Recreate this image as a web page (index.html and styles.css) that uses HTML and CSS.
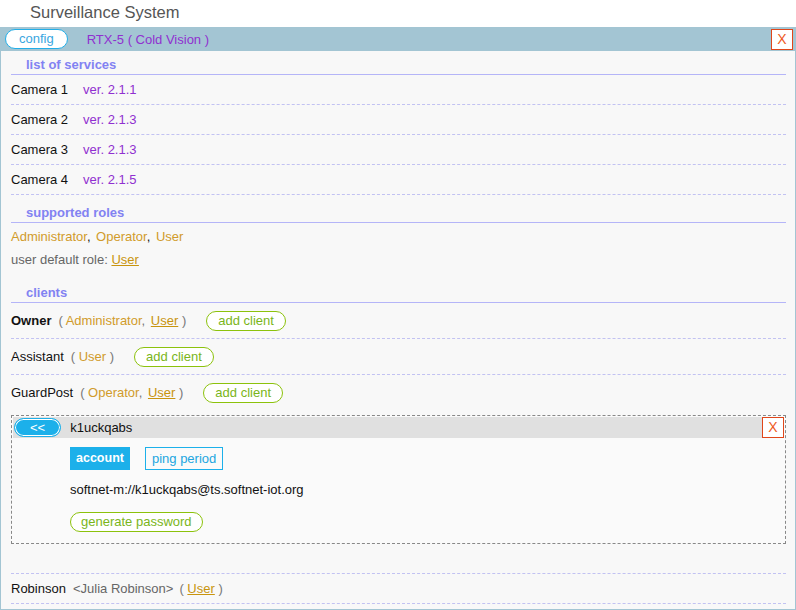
FILE: index.html
```html
<!DOCTYPE html>
<html>
<head>
<meta charset="utf-8">
<title>Surveillance System</title>
<link rel="stylesheet" href="styles.css">
</head>
<body>
<div class="title">Surveillance System</div>
<div class="panel">
  <div class="bar">
    <button class="pill pill-blue">config</button>
    <span class="device">RTX-5 ( Cold Vision )</span>
    <button class="close">X</button>
  </div>
  <div class="content">
    <h3 class="section first">list of services</h3>
    <div class="row"><span class="name">Camera 1</span><span class="ver">ver. 2.1.1</span></div>
    <div class="row"><span class="name">Camera 2</span><span class="ver">ver. 2.1.3</span></div>
    <div class="row"><span class="name">Camera 3</span><span class="ver">ver. 2.1.3</span></div>
    <div class="row"><span class="name">Camera 4</span><span class="ver">ver. 2.1.5</span></div>

    <h3 class="section">supported roles</h3>
    <div class="roles">
      <div class="line"><span class="role">Administrator</span>, <span class="role">Operator</span>, <span class="role">User</span></div>
      <div class="line muted">user default role: <a class="link">User</a></div>
    </div>

    <h3 class="section">clients</h3>
    <div class="crow"><span class="cname strong">Owner</span><span class="paren">( <span class="role">Administrator</span>, <a class="link role">User</a> )</span><button class="pill pill-green">add client</button></div>
    <div class="crow"><span class="cname">Assistant</span><span class="paren">( <span class="role">User</span> )</span><button class="pill pill-green">add client</button></div>
    <div class="group">
      <div class="crow plain"><span class="cname">GuardPost</span><span class="paren">( <span class="role">Operator</span>, <a class="link role">User</a> )</span><button class="pill pill-green">add client</button></div>
      <div class="client-box">
        <div class="client-head">
          <button class="back">&lt;&lt;</button>
          <span class="client-id">k1uckqabs</span>
          <button class="close small">X</button>
        </div>
        <div class="client-body">
          <div class="tabs">
            <span class="tab active">account</span>
            <span class="tab">ping period</span>
          </div>
          <div class="address">softnet-m://k1uckqabs@ts.softnet-iot.org</div>
          <button class="pill pill-green wide">generate password</button>
        </div>
      </div>
    </div>
    <div class="row"><span class="name">Robinson</span><span class="full">&lt;Julia Robinson&gt;</span><span class="paren">( <a class="link">User</a> )</span></div>
  </div>
</div>
</body>
</html>
```

FILE: styles.css
```css
* { box-sizing: border-box; }
html, body { margin: 0; padding: 0; background: #ffffff; }
body {
  font-family: "Liberation Sans", Arial, sans-serif;
  font-size: 13px;
  color: #111;
}
button { font-family: inherit; cursor: pointer; }

.title {
  height: 27px;
  line-height: 24px;
  padding-left: 30px;
  font-size: 16.5px;
  color: #555;
}

.panel {
  border: 1px solid #a3c5d3;
  border-top: none;
  background: #f8f8f8;
}

.bar {
  height: 24px;
  background: #a3c5d3;
  display: flex;
  align-items: center;
  padding: 0 2px 0 4px;
}

.pill {
  height: 20px;
  line-height: 18px;
  border-radius: 10px;
  background: #fff;
  font-size: 13px;
  padding: 0 11px;
  border: 1px solid;
}
.pill-blue {
  border-color: #22aee8;
  color: #3aa6e0;
  padding: 0 13px;
}
.pill-green {
  border-color: #8cc20c;
  color: #7ab51a;
  margin-left: 20px;
}
.pill-green.wide { margin-left: 0; margin-top: 12px; padding: 0 10px; }

.device {
  margin-left: 19px;
  color: #9030d0;
}

.close {
  margin-left: auto;
  width: 22px;
  height: 21px;
  padding: 0;
  background: #fff;
  border: 1px solid #e0461a;
  color: #ee5a24;
  font-size: 14px;
  line-height: 19px;
}

.content {
  padding: 0 9px 5px 10px;
}

.section {
  margin: 7px 0 0 0;
  padding: 1px 0 0 15px;
  line-height: 19px;
  font-size: 13px;
  font-weight: bold;
  color: #8282f2;
  border-bottom: 1px solid #b5b5f8;
}
.section.first { margin-top: 3px; }

.row {
  line-height: 29px;
  border-bottom: 1px dashed #c2c2f2;
  display: flex;
}
.ver { margin-left: 15px; color: #9030d0; }

.roles { padding: 4px 0 5px 0; }
.line { line-height: 20px; }
.line + .line { margin-top: 3px; }
.muted { color: #666; }
.role { color: #d19b2b; }
.role + .role { margin-left: 2px; }
.link { color: #c8940e; text-decoration: underline; }

.crow {
  height: 36px;
  display: flex;
  align-items: center;
  border-bottom: 1px dashed #c2c2f2;
}
.crow.plain { border-bottom: none; height: 35px; }
.cname.strong { font-weight: bold; }
.paren { margin-left: 7px; color: #777; }

.group {
  border-bottom: 1px dashed #c2c2f2;
  padding-bottom: 29px;
}

.client-box {
  margin-top: 5px;
  border: 1px dashed #888;
  padding: 1px;
  background: #fafafa;
}
.client-head {
  height: 21px;
  background: #e0e0e0;
  display: flex;
  align-items: center;
}
.back {
  margin-left: 1px;
  height: 19px;
  padding: 0 15px;
  border-radius: 10px;
  background: #1cb0ea;
  border: 1px solid #1cb0ea;
  box-shadow: inset 0 0 0 1px #fff;
  color: #fff;
  font-size: 13px;
  line-height: 17px;
}
.client-id { margin-left: 9px; }
.close.small { height: 21px; }

.client-body {
  padding: 9px 0 10px 57px;
}
.tabs { display: flex; gap: 15px; }
.tab {
  height: 23px;
  line-height: 21px;
  padding: 0 6px;
  border: 1px solid #1cb0ea;
  color: #22a6e0;
}
.tab.active {
  background: #1cb0ea;
  color: #fff;
  font-weight: bold;
  font-size: 12.5px;
  padding: 0 5px;
}
.address {
  margin-top: 10px;
  line-height: 20px;
  color: #111;
}

.full { margin-left: 7px; color: #666; }
.row .paren { margin-left: 6px; }
```
